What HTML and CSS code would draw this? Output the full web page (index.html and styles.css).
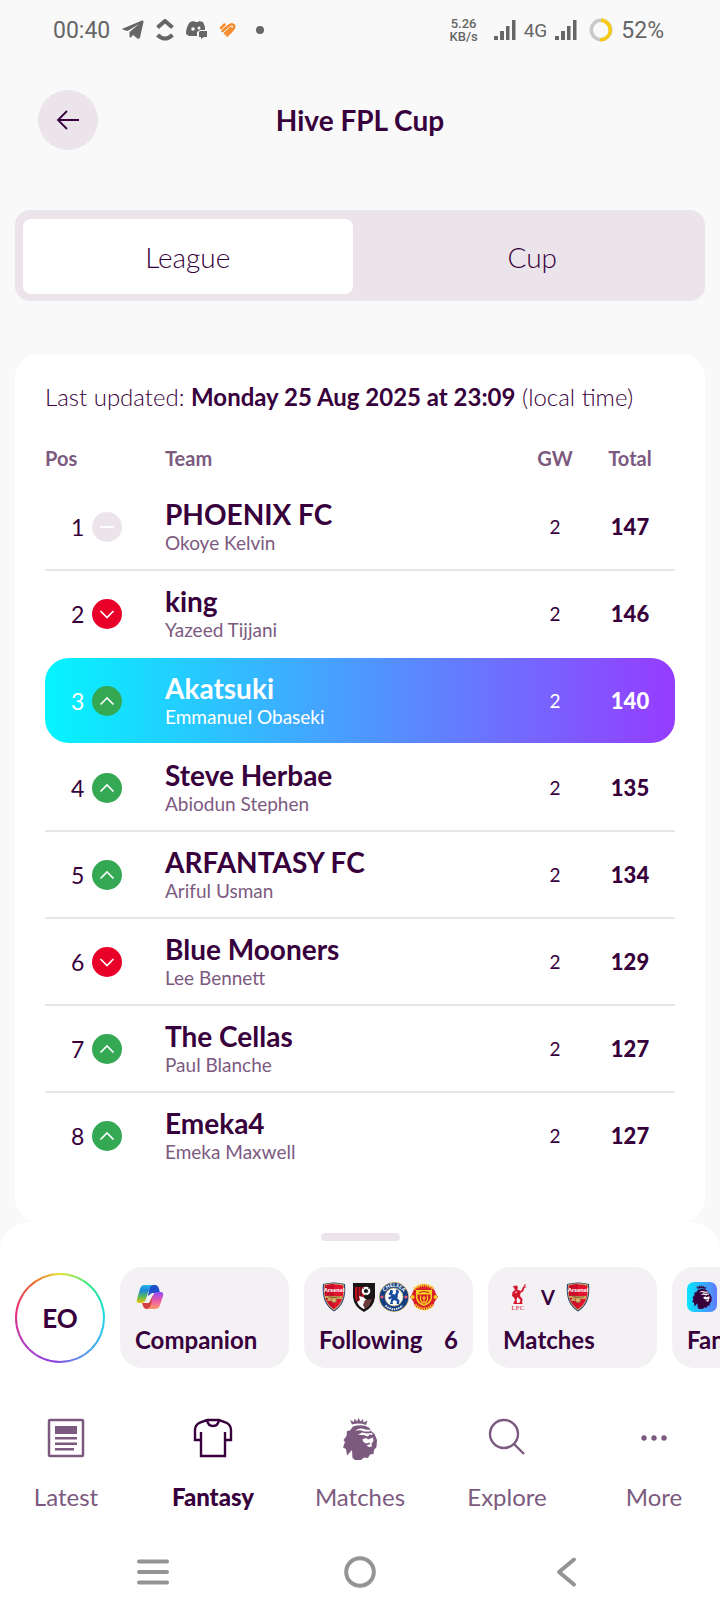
FILE: index.html
```html
<!DOCTYPE html>
<html lang="en">
<head>
  <meta charset="utf-8">
  <meta content="initial-scale=1" name="viewport">
  <title>Hive FPL Cup</title>
  <link rel="stylesheet" href="styles.css">
</head>
<body>
  <!-- Shared symbols -->
  <svg class="defs" width="0" height="0" aria-hidden="true">
    <defs>
      <linearGradient id="tile" x1="0" x2="1"><stop offset="0" stop-color="#05e6ff"/><stop offset="1" stop-color="#5f7cff"/></linearGradient>
      <linearGradient id="cpA" x1="0" y1="0" x2="0" y2="1"><stop offset="0" stop-color="#29b5e8"/><stop offset=".3" stop-color="#1b87d8"/><stop offset=".65" stop-color="#5cb85a"/><stop offset="1" stop-color="#f2c40f"/></linearGradient>
      <linearGradient id="cpB" x1="0" y1="0" x2="0" y2="1"><stop offset="0" stop-color="#8f4df5"/><stop offset=".5" stop-color="#e85aa8"/><stop offset="1" stop-color="#ff9a6b"/></linearGradient>
    </defs>
    <symbol id="up" viewBox="0 0 30 30"><circle cx="15" cy="15" r="15" fill="#34a853"/><path d="M8.500 18.500L15 12L21.500 18.500" fill="none" stroke="#fff" stroke-width="1.700"/></symbol>
    <symbol id="down" viewBox="0 0 30 30"><circle cx="15" cy="15" r="15" fill="#e90029"/><path d="M8.500 12L15 18.500L21.500 12" fill="none" stroke="#fff" stroke-width="1.700"/></symbol>
    <symbol id="same" viewBox="0 0 30 30"><circle cx="15" cy="15" r="15" fill="#ebe5eb"/><path d="M8 15H22" stroke="#fff" stroke-width="1.800"/></symbol>
    <symbol id="signal" viewBox="0 0 22 20"><path d="M0 16h4v4H0zM6 11h4v9H6zM12 6h3.500v14H12zM18 0h3.500v20H18z" fill="#666"/></symbol>
    <symbol id="lion" viewBox="0 0 34 42">
      <path d="M9 6.500L7 2l4 2 .5-3.500L14 3.500 15.500 0 17.500 3.500 20 1l.5 3.500L24.500 2.500 23 7Q16 4.500 9 6.500z" fill="currentColor"/>
      <path d="M10 8.500Q19 5.500 26 9.500L28 13 31.500 16 34 22 33.500 29 31 32 30.500 36 27 36.500 25 40 21 39.500 18 42H12L9.500 40 9 32 4 37.500 3 31 0 29.500 2 24 .5 22 3.500 18 4 13 7 12.500z" fill="currentColor"/>
      <path class="lion-face" d="M12 13Q17 9 22 11.500L27.500 12 27 13.500 21 13.500Q17 11.500 12 13zM15 17L19 14.500 24 15.500 29 15 29.500 17 26.500 16.500 25 18.500 20.500 17zM19.500 21L23.500 20 25 21.500 30 19.500 30.500 23 28.500 25.500 29 28.500 26 29 23.500 27.500 27 26 27 24.500 23 25.500 20 23.500z"/>
    </symbol>
    <symbol id="arsenal" viewBox="0 0 24 30">
      <path d="M1 2Q12 -1 23 2Q25 22 12 29.500Q-1 22 1 2z" fill="#1d3f73"/>
      <path d="M2 2.500Q12 0 22 2.500Q24 21 12 28.500Q0 21 2 2.500z" fill="#c9a468"/>
      <path d="M3 3.500Q12 1.500 21 3.500Q23 20 12 27Q1 20 3 3.500z" fill="#e3122f"/>
      <path d="M3 3.500Q7 2 12 2V27Q1 20 3 3.500z" fill="#c90d2b"/>
      <path d="M3 14h17v3H11l-1 2H5l1-3H3z" fill="#caa45c"/><circle cx="12" cy="18" r="2.600" fill="#d9b56d" stroke="#8b5c2b" stroke-width=".7"/><path d="M7 13l3 3M6 15h12" stroke="#85572b" stroke-width=".8"/>
    </symbol>
  </svg>

  <header class="status">
    <div class="status-left">
      <span class="clock">00:40</span>
      <svg width="22" height="20" viewBox="0 0 22 20"><path d="M1 8.500L20 .5Q22 0 21.500 2L18 17.500Q17.500 19.500 15.500 18.500L11 15 9 17.500Q7.500 18 7.500 16V12L17 4 5.500 11 1 9.700Q-.5 9 1 8.500z" fill="#666"/></svg>
      <svg width="18" height="22" viewBox="0 0 18 22"><path d="M1.500 8.500L9 2l7.500 6.500M1.500 16Q9 23 16.500 16" fill="none" stroke="#666" stroke-width="4"/></svg>
      <svg width="21" height="18" viewBox="0 0 21 18"><path d="M4 1l4-1 1 1h3l1-1 4 1 2 5 0 3h-5l-3 2v4H6l-3 0-3-2Q0 6 4 1zM14 10h7v6h-3l-3 2v-2h-2v-5z" fill="#666"/><circle cx="7" cy="8" r="1.800" fill="#f9f9f9"/><circle cx="13" cy="7" r="1.500" fill="#f9f9f9"/></svg>
      <svg width="17" height="14" viewBox="0 0 17 14"><path d="M2 5L5.500 1.500M3.500 8L10 2.500Q13 0 15 2.500 16 5 13 7.500L8 12.500M6 10.500L12 5" fill="none" stroke="#f68b2c" stroke-width="2.500" stroke-linecap="round"/></svg>
      <svg class="dot" width="8" height="8" viewBox="0 0 8 8"><circle cx="4" cy="4" r="4" fill="#666"/></svg>
    </div>
    <div class="status-right">
      <span class="speed">5.26<br>KB/s</span>
      <svg width="22" height="20"><use href="#signal"/></svg>
      <span class="net">4G</span>
      <svg width="22" height="20"><use href="#signal"/></svg>
      <svg class="battery" width="24" height="24" viewBox="0 0 24 24" fill="none" stroke-width="3.500"><circle cx="12" cy="12" r="9.700" stroke="#c8c8c8"/><path d="M12 2.300A9.700 9.700 0 1 1 11 21.700" stroke="#f7cb15"/></svg>
      <span class="clock">52%</span>
    </div>
  </header>

  <div class="title-bar">
    <button class="back" type="button" aria-label="Back">
      <svg width="24" height="20" viewBox="0 0 24 20" fill="none" stroke="#37003c" stroke-width="1.800"><path d="M11 1L2 10l9 9M2 10H23"/></svg>
    </button>
    <h1>Hive FPL Cup</h1>
  </div>

  <main>
    <div class="tabs">
      <button class="tab active" type="button">League</button>
      <button class="tab" type="button">Cup</button>
    </div>

    <section class="card">
      <p class="updated">Last updated: <strong>Monday 25 Aug 2025 at 23:09</strong> (local time)</p>
      <table>
        <thead>
          <tr><th>Pos</th><th>Team</th><th class="gw">GW</th><th class="total">Total</th></tr>
        </thead>
        <tbody>
          <tr>
            <td class="pos">1 <svg><use href="#same"/></svg></td>
            <td><span class="team">PHOENIX FC</span><span class="manager">Okoye Kelvin</span></td>
            <td class="gw">2</td><td class="total">147</td>
          </tr>
          <tr class="plain">
            <td class="pos">2 <svg><use href="#down"/></svg></td>
            <td><span class="team">king</span><span class="manager">Yazeed Tijjani</span></td>
            <td class="gw">2</td><td class="total">146</td>
          </tr>
          <tr class="mine">
            <td class="pos">3 <svg><use href="#up"/></svg></td>
            <td><span class="team">Akatsuki</span><span class="manager">Emmanuel Obaseki</span></td>
            <td class="gw">2</td><td class="total">140</td>
          </tr>
          <tr>
            <td class="pos">4 <svg><use href="#up"/></svg></td>
            <td><span class="team">Steve Herbae</span><span class="manager">Abiodun Stephen</span></td>
            <td class="gw">2</td><td class="total">135</td>
          </tr>
          <tr>
            <td class="pos">5 <svg><use href="#up"/></svg></td>
            <td><span class="team">ARFANTASY FC</span><span class="manager">Ariful Usman</span></td>
            <td class="gw">2</td><td class="total">134</td>
          </tr>
          <tr>
            <td class="pos">6 <svg><use href="#down"/></svg></td>
            <td><span class="team">Blue Mooners</span><span class="manager">Lee Bennett</span></td>
            <td class="gw">2</td><td class="total">129</td>
          </tr>
          <tr>
            <td class="pos">7 <svg><use href="#up"/></svg></td>
            <td><span class="team">The Cellas</span><span class="manager">Paul Blanche</span></td>
            <td class="gw">2</td><td class="total">127</td>
          </tr>
          <tr class="plain">
            <td class="pos">8 <svg><use href="#up"/></svg></td>
            <td><span class="team">Emeka4</span><span class="manager">Emeka Maxwell</span></td>
            <td class="gw">2</td><td class="total">127</td>
          </tr>
        </tbody>
      </table>
    </section>
  </main>

  <footer class="sheet">
    <div class="handle"></div>
    <div class="chips">
      <button class="avatar" type="button">EO</button>
      <button class="chip" type="button">
        <span class="chip-icons">
          <svg width="30" height="30" viewBox="0 0 30 30">
            <path d="M15 3h5q3 0 4 4l1 4h-8l-4 3z" fill="#1c4fc9"/>
            <path d="M7 21h7l4-8 1 8-3 6h-4q-3 0-4-3z" fill="#d2413f"/>
            <path d="M9 3h9q-3 1-4 5l-3 9q-1 4-5 4H4q-3 0-2-4L5 7q1-4 4-4z" fill="url(#cpA)"/>
            <path d="M21 10h5q3 0 2 4l-3 9q-1 4-5 4h-8q3-1 4-5l2-8q1-4 3-4z" fill="url(#cpB)"/>
          </svg>
        </span>
        <span class="chip-label">Companion</span>
      </button>
      <button class="chip" type="button">
        <span class="chip-icons">
          <svg width="30" height="30" viewBox="0 0 30 30">
            <use href="#arsenal" x="3" width="24" height="30"/>
            <text x="15" y="9.500" font-size="6" font-weight="900" text-anchor="middle" fill="#fff">Arsenal</text>
          </svg>
          <svg width="30" height="30" viewBox="-4 0 30 30">
            <path d="M0 1H22V15Q21 25 11 30Q1 25 0 15z" fill="#1a1416"/>
            <path d="M2 5H11V26Q3 22 2 15z" fill="#c40d1e"/><path d="M5 5V21M8 5V24" stroke="#391014" stroke-width="1.300"/>
            <circle cx="13" cy="9" r="4.300" fill="#fff"/><path d="M13 7l2 1.500-.7 2h-2.600L11 8.500zM10 6l1 1M16 6l-1 1M13 12v1.500" fill="#111" stroke="#111" stroke-width=".6"/>
            <path d="M6 14l4 1 4 3 3 0-1 5-5 4Q6 25 4 20L7 18z" fill="#fff"/><path d="M12 18l7-1-2 5-5 5-2-4z" fill="#6b3b3c"/>
          </svg>
          <svg width="30" height="30" viewBox="0 0 30 30">
            <circle cx="15" cy="15" r="15" fill="#d4b469"/><circle cx="15" cy="15" r="14.300" fill="#123d83"/>
            <circle cx="15" cy="15" r="9" fill="#fff" stroke="#d4b469" stroke-width=".7"/>
            <path id="chArc" d="M4.800 15A10.200 10.200 0 0 1 25.200 15" fill="none"/>
            <text font-size="5" font-weight="900" fill="#fff" text-anchor="middle"><textPath href="#chArc" startOffset="50%">CHELSEA</textPath></text>
            <path d="M6.500 23.500Q15 31 23.500 23.500" fill="none" stroke="#e8ecf4" stroke-width="2" stroke-dasharray="1.500 .8"/>
            <circle cx="3" cy="15" r="1.600" fill="#e65d72"/><circle cx="27" cy="15" r="1.600" fill="#e65d72"/>
            <path d="M11 8l2.500 0 .5 2.500-1 1.500 3 .5L17.500 10 16.500 8.500 19 8 20 10 18.500 13 18 16 20.500 18.500 20 22H17.500L18 19.500 15.500 18 13.500 19.500 14 22H11L12 18 13 16 10.500 17.500 9 16 10 15 12.500 14 10 12.500 9.500 11 11 10.500z" fill="#174a9b"/><path d="M18 7v9" stroke="#174a9b"/>
          </svg>
          <svg width="30" height="30" viewBox="-1 0 30 30">
            <path d="M4 7Q14 -2 24 7L26 12 28 15 25 19 23 24Q14 32 5 24L3 19 0 15 2 12z" fill="#da1f26"/>
            <path d="M4 7Q14 -1 24 7M5 23Q14 31 23 23" fill="none" stroke="#f6cf2b" stroke-width="3" stroke-dasharray="1.500 .9"/>
            <circle cx="2.500" cy="15" r="2" fill="#f4cf23"/><circle cx="25.500" cy="15" r="2" fill="#f4cf23"/>
            <path d="M6 8H22V16Q21 22 14 24Q7 22 6 16z" fill="#f7cf22"/><path d="M7.500 12.500H20.500V16Q19 20.500 14 22.500Q9 20.500 7.500 16z" fill="#d51b23"/>
            <path d="M9 10.500Q14 8.500 19 10.500" fill="none" stroke="#b81a20"/><path d="M10.500 13.500v4l2 3.500h3l2-3.500v-4M14 14v6.500M12 16h4" fill="none" stroke="#f7cf22" stroke-width="1.200"/>
          </svg>
        </span>
        <span class="chip-label">Following <span>6</span></span>
      </button>
      <button class="chip" type="button">
        <span class="chip-icons">
          <svg width="30" height="30" viewBox="-7 -1 30 30">
            <path d="M3 3L7 2.500 8 5 7 6.500 11 8 12.500 5 15 1 16 2 14 4 17 3.500 14 5.500 13.500 8 10.500 10 10 13 12.500 16 12 20H9.500L10.500 17 7.500 14 6.500 17 7 20H3.500L5 17 4 14.500 2 13 2.500 9 5 7 4 5z" fill="#d4182c"/>
            <path d="M6 10l3 1.500M3.500 20.500h9" stroke="#d4182c"/><path d="M5 9.500l2-.5" stroke="#f4f1f5"/>
            <text x="8" y="27" font-size="7" font-family="Liberation Serif, serif" text-anchor="middle" fill="#d4182c">LFC</text>
          </svg>
          <span class="versus">V</span>
          <svg width="30" height="30" viewBox="0 0 30 30">
            <use href="#arsenal" x="3" width="24" height="30"/>
            <text x="15" y="9.500" font-size="6" font-weight="900" text-anchor="middle" fill="#fff">Arsenal</text>
          </svg>
        </span>
        <span class="chip-label">Matches</span>
      </button>
      <button class="chip" type="button">
        <span class="chip-icons">
          <svg class="tile" width="30" height="30" viewBox="0 0 30 30"><rect width="30" height="30" rx="7" fill="url(#tile)"/><use href="#lion" x="5" y="3" width="20" height="24"/></svg>
        </span>
        <span class="chip-label">Fantasy</span>
      </button>
    </div>

    <nav class="nav">
      <a href="#">
        <svg width="40" height="40" viewBox="0 0 40 40"><rect x="3" y="2" width="34" height="36" rx="1" fill="none" stroke="currentColor" stroke-width="2.500"/><path d="M9 8h22v8H9zM9 19h22v2.500H9zM9 24.500h22V27H9zM9 30h19v2.500H9z" fill="currentColor"/></svg>
        Latest
      </a>
      <a class="current" href="#">
        <svg width="40" height="40" viewBox="0 0 40 40" fill="none" stroke="currentColor" stroke-width="2.400"><path d="M14 2H26L33 4.500Q38 7 38 12V22H32V38H8V22H2V12Q2 7 7 4.500zM8 14V23M32 14V23M14 2Q15 8 20 8Q25 8 26 2"/></svg>
        Fantasy
      </a>
      <a href="#">
        <svg width="34" height="42"><use href="#lion"/></svg>
        Matches
      </a>
      <a href="#">
        <svg width="40" height="40" viewBox="0 0 40 40" fill="none" stroke="currentColor" stroke-width="2.400"><circle cx="17" cy="16" r="14"/><path d="M27 26L37 36"/></svg>
        Explore
      </a>
      <a href="#">
        <svg width="40" height="40" viewBox="0 0 40 40" fill="currentColor"><circle cx="10" cy="20" r="2.700"/><circle cx="20" cy="20" r="2.700"/><circle cx="30" cy="20" r="2.700"/></svg>
        More
      </a>
    </nav>

    <div class="system">
      <button type="button" aria-label="Recents"><svg width="34" height="32" viewBox="0 0 34 32"><path d="M3 5.500H31M3 16H31M3 26.500H31" stroke="#949494" stroke-width="4" stroke-linecap="round"/></svg></button>
      <button type="button" aria-label="Home"><svg width="34" height="32" viewBox="0 0 34 32"><circle cx="17" cy="16" r="13.800" fill="none" stroke="#949494" stroke-width="4"/></svg></button>
      <button type="button" aria-label="Back"><svg width="34" height="32" viewBox="0 0 34 32"><path d="M24 3.500L9 16 24 28.500" fill="none" stroke="#949494" stroke-width="4" stroke-linecap="round" stroke-linejoin="round"/></svg></button>
    </div>
  </footer>
</body>
</html>
```
FILE: styles.css
```css
* { box-sizing: border-box; }
body { background: #f9f9f9; color: #37003c; font-family: Lato, "Open Sans", sans-serif; margin: 0; overflow-x: hidden; }
button { background: none; border: 0; color: inherit; cursor: pointer; font-family: inherit; margin: 0; padding: 0; }
svg { flex: none; }
.defs { display: block; }

/* Status bar */
.status { align-items: center; color: #666; display: flex; font-family: Roboto, sans-serif; height: 60px; justify-content: space-between; padding: 0 56px 0 53px; }
.status-left, .status-right { align-items: center; display: flex; }
.status-left { gap: 12px; }
.status-right { gap: 8px; }
.clock { font-size: 23px; }
.dot { margin-left: 8px; }
.speed { font-size: 13px; font-weight: 500; line-height: 13px; margin-right: 8px; text-align: center; }
.net { font-size: 19px; }
.battery { margin-left: 4px; }

/* Title */
.title-bar { align-items: center; display: grid; grid-template-columns: 60px 1fr 60px; height: 120px; padding: 0 38px; }
.back { align-items: center; background: #ebe5eb; border-radius: 50%; display: flex; height: 60px; justify-content: center; width: 60px; }
h1 { font-size: 28px; font-weight: 700; margin: 0; text-align: center; }

/* League / Cup */
main { padding: 30px 15px 0; }
.tabs { background: #ebe5eb; border-radius: 15px; display: grid; gap: 15px; grid-template-columns: 1fr 1fr; padding: 9px 8px 7px; }
.tab { border-radius: 8px; font-size: 28px; font-weight: 300; height: 75px; }
.tab.active { background: #fff; }

/* Standings */
.card { background: #fff; border-radius: 24px; margin-top: 53px; padding: 28px 30px 42px; }
.updated { font-size: 24px; font-weight: 300; line-height: 30px; margin: 0; white-space: nowrap; }
.updated strong { font-weight: 700; }
table { display: block; margin-top: 30px; }
thead, tbody { display: block; }
tr { align-items: center; display: grid; grid-template-columns: 120px 1fr 60px 90px; }
th, td { padding: 0; }
tbody { margin-top: 10px; }
tbody tr { border-bottom: 2px solid #e6e6e6; height: 87px; }
tbody tr.plain { border-color: transparent; }
tbody tr.mine { background: linear-gradient(90deg, #04f5ff, #963cff); border: 0; border-radius: 24px; color: #fff; height: 85px; margin-bottom: 2px; }
.pos { align-items: center; display: flex; font-size: 23px; gap: 8px; padding-left: 26px; }
.pos svg { height: 30px; width: 30px; }
.team, .manager { display: block; }
.team { font-size: 28px; font-weight: 700; line-height: 32px; }
.manager { color: #7c5a80; font-size: 19px; line-height: 26px; }
.mine .manager { color: #fff; }
.gw { font-size: 19px; text-align: center; }
.total { font-size: 22px; font-weight: 900; text-align: center; }
th, th.gw, th.total { color: #7c5a80; font-size: 20px; font-weight: 700; line-height: 32px; }
th { text-align: left; }

/* Bottom sheet */
.sheet { background: #fff; border-radius: 30px 30px 0 0; overflow: hidden; padding-top: 11px; }
.handle { background: #ebe5eb; border-radius: 4px; height: 8px; margin: 0 auto; width: 79px; }
.chips { align-items: center; display: flex; gap: 15px; margin-top: 26px; padding-left: 15px; }
.avatar { background: linear-gradient(#fff, #fff) padding-box, conic-gradient(#e8e337, #2be88a 12%, #20d8e8 25%, #5f8fe8 43%, #8a3fe0 52%, #b03fc0 65%, #e8307a 78%, #e86a28 90%, #e8e337) border-box; border: 2px solid transparent; border-radius: 50%; flex: none; font-size: 26px; font-weight: 700; height: 90px; width: 90px; }
.chip { background: #f4f1f5; border-radius: 22px; display: flex; flex: none; flex-direction: column; gap: 13px; height: 101px; padding: 15px; text-align: left; width: 169px; }
.chip-icons { display: flex; height: 30px; }
.chip-label { display: flex; font-size: 24px; font-weight: 700; justify-content: space-between; line-height: 30px; width: 100%; }
.versus { font-size: 20px; font-weight: 700; line-height: 30px; text-align: center; width: 30px; }
.lion-face { fill: #fff; }
.tile { color: #37003c; }

/* App navigation */
.nav { display: grid; grid-template-columns: 132fr 162fr 132fr 162fr 132fr; padding-top: 50px; }
.nav a { align-items: center; color: #7c5a80; display: flex; flex-direction: column; font-size: 24px; height: 94px; justify-content: space-between; line-height: 30px; text-decoration: none; }
.nav a.current { color: #37003c; font-weight: 900; }

/* System navigation */
.system { align-items: center; display: flex; height: 100px; justify-content: space-around; padding: 22px 50px 0; }
```
